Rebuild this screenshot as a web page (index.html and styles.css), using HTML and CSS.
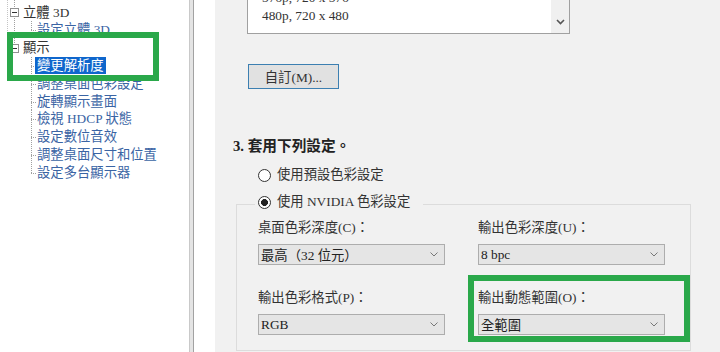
FILE: index.html
```html
<!DOCTYPE html>
<html lang="zh-Hant">
<head>
  <meta charset="UTF-8">
  <title>變更解析度</title>
  <link rel="stylesheet" href="styles.css">
</head>
<body>
  <div class="window">
    <nav class="tree">
      <div class="node root">
        <svg class="toggle" width="9" height="9" viewBox="0 0 9 9"><rect x="0.5" y="0.5" width="8" height="8" fill="#fff" stroke="#919191"/><line x1="2" y1="4.5" x2="7" y2="4.5" stroke="#333"/></svg>
        <span>立體 3D</span>
      </div>
      <div class="node child last">設定立體 3D</div>
      <div class="node root">
        <svg class="toggle" width="9" height="9" viewBox="0 0 9 9"><rect x="0.5" y="0.5" width="8" height="8" fill="#fff" stroke="#919191"/><line x1="2" y1="4.5" x2="7" y2="4.5" stroke="#333"/></svg>
        <span>顯示</span>
      </div>
      <div class="node child"><span class="selected">變更解析度</span></div>
      <div class="node child">調整桌面色彩設定</div>
      <div class="node child">旋轉顯示畫面</div>
      <div class="node child">檢視 HDCP 狀態</div>
      <div class="node child">設定數位音效</div>
      <div class="node child">調整桌面尺寸和位置</div>
      <div class="node child last">設定多台顯示器</div>
    </nav>
    <div class="splitter"></div>
    <div class="gutter"></div>

    <main class="content">
      <div class="res-list">
        <div class="res-items">
          <div class="res-item">576p, 720 x 576</div>
          <div class="res-item">480p, 720 x 480</div>
        </div>
        <div class="scroll">
          <svg width="9" height="6" viewBox="0 0 9 6"><polyline points="1,1 4.5,4.5 8,1" fill="none" stroke="#555" stroke-width="1.6"/></svg>
        </div>
      </div>

      <button class="custom-btn">自訂(M)...</button>

      <div class="step-title">3. 套用下列設定。</div>

      <div class="radio radio-first"><span class="dot"></span>使用預設色彩設定</div>

      <fieldset class="color-group">
        <legend class="radio"><span class="dot checked"></span>使用 NVIDIA 色彩設定</legend>
        <div class="settings-grid">
          <div class="field">
            <div class="field-label">桌面色彩深度(C)：</div>
            <div class="select"><span>最高（32 位元）</span><svg width="8" height="5" viewBox="0 0 8 5"><polyline points="0.5,0.5 4,4 7.5,0.5" fill="none" stroke="#777"/></svg></div>
          </div>
          <div class="field">
            <div class="field-label">輸出色彩深度(U)：</div>
            <div class="select"><span>8 bpc</span><svg width="8" height="5" viewBox="0 0 8 5"><polyline points="0.5,0.5 4,4 7.5,0.5" fill="none" stroke="#777"/></svg></div>
          </div>
          <div class="field">
            <div class="field-label">輸出色彩格式(P)：</div>
            <div class="select"><span>RGB</span><svg width="8" height="5" viewBox="0 0 8 5"><polyline points="0.5,0.5 4,4 7.5,0.5" fill="none" stroke="#777"/></svg></div>
          </div>
          <div class="field">
            <div class="field-label">輸出動態範圍(O)：</div>
            <div class="select"><span>全範圍</span><svg width="8" height="5" viewBox="0 0 8 5"><polyline points="0.5,0.5 4,4 7.5,0.5" fill="none" stroke="#777"/></svg></div>
          </div>
        </div>
      </fieldset>
    </main>
  </div>

  <div class="mark mark-tree"></div>
  <div class="mark mark-range"></div>
</body>
</html>
```

FILE: styles.css
```css
body {
  margin: 0;
  font-family: "Liberation Serif", "Noto Sans CJK TC", serif;
  font-size: 13.33px;
  color: #222;
  position: relative;
}

.window {
  display: flex;
  width: 720px;
  height: 352px;
  overflow: hidden;
}

/* left navigation tree */
.tree {
  width: 189px;
  flex-shrink: 0;
  padding-top: 3.6px;
  box-sizing: border-box;
  background:
    repeating-linear-gradient(to bottom, #a0a0a0 0 1px, transparent 1px 2px) 14px 0 / 1px 46px no-repeat,
    repeating-linear-gradient(to bottom, #c4c4c4 0 1px, transparent 1px 2px) 7px 0 / 1px 34px no-repeat,
    #fff;
}

.node {
  height: 17.8px;
  line-height: 17.8px;
  white-space: nowrap;
}

.root {
  display: flex;
  align-items: center;
  gap: 4px;
  padding-left: 10px;
  color: #333;
}

.toggle {
  display: block;
}

.child {
  padding-left: 37px;
  color: #3a64a4;
  background:
    repeating-linear-gradient(to bottom, #a0a0a0 0 1px, transparent 1px 2px) 31px 0 / 1px 100% no-repeat,
    repeating-linear-gradient(to right, #a0a0a0 0 1px, transparent 1px 2px) 31px 9px / 6px 1px no-repeat;
}

.child.last {
  background:
    repeating-linear-gradient(to bottom, #a0a0a0 0 1px, transparent 1px 2px) 31px 0 / 1px 9px no-repeat,
    repeating-linear-gradient(to right, #a0a0a0 0 1px, transparent 1px 2px) 31px 9px / 6px 1px no-repeat;
}

.selected {
  display: inline-block;
  margin-left: -2px;
  padding: 0 2px;
  line-height: 17px;
  background: #0f66cc;
  color: #fff;
}

.splitter {
  width: 3px;
  flex-shrink: 0;
  border-left: 1px solid #c9c9c9;
  border-right: 1px solid #a2a2a2;
  background: #e4e4e4;
}

.gutter {
  width: 21px;
  flex-shrink: 0;
  background: #fff;
}

/* main settings page */
.content {
  flex: 1;
  background: #f1f1f1;
}

.res-list {
  display: flex;
  width: 323px;
  margin: -12px 0 0 32px;
  box-sizing: border-box;
  border: 1px solid #a0a0a0;
  background: #fff;
}

.res-items {
  flex: 1;
  padding: 0 0 8px 14px;
}

.res-item {
  line-height: 18px;
  color: #333;
}

.scroll {
  width: 18px;
  display: flex;
  align-items: flex-end;
  justify-content: center;
  padding-bottom: 8px;
  background: #f0f0f0;
}

.custom-btn {
  display: block;
  width: 91px;
  height: 25px;
  margin: 30px 0 0 33px;
  padding: 0;
  border: 1px solid #3c7fb1;
  background: #e1e1e1;
  font: inherit;
  color: #333;
}

.step-title {
  margin: 48px 0 0 18px;
  line-height: 18px;
  font-size: 14.67px;
  font-weight: bold;
}

.radio {
  display: flex;
  align-items: center;
  gap: 6px;
  line-height: 18px;
  color: #333;
}

.radio-first {
  margin: 11px 0 0 43px;
}

.dot {
  width: 13px;
  height: 13px;
  box-sizing: border-box;
  border: 1px solid #333;
  border-radius: 50%;
  background: #fff;
}

.dot.checked {
  background: radial-gradient(circle, #222 0 3.2px, #fff 3.7px);
}

.color-group {
  width: 455px;
  margin: 9px 0 0 21px;
  padding: 4px 0 15px 18px;
  box-sizing: border-box;
  border: 1px solid #dcdcdc;
}

.color-group legend {
  padding: 0 13px 4px 3px;
}

.settings-grid {
  display: grid;
  grid-template-columns: 187px 187px;
  column-gap: 33px;
  row-gap: 24px;
  margin-left: 3px;
}

.field-label {
  line-height: 18px;
  color: #333;
}

.select {
  display: flex;
  align-items: center;
  justify-content: space-between;
  height: 21px;
  margin-top: 7px;
  padding: 0 6px 0 2px;
  box-sizing: border-box;
  border: 1px solid #adadad;
  background: #e5e5e5;
  color: #222;
}

/* annotation frames drawn over the screenshot */
.mark {
  position: absolute;
  box-sizing: border-box;
  border: 6px solid #2aa84a;
}

.mark-tree {
  left: 7px;
  top: 32px;
  width: 152px;
  height: 49px;
}

.mark-range {
  left: 468px;
  top: 275px;
  width: 222px;
  height: 67px;
}
```
